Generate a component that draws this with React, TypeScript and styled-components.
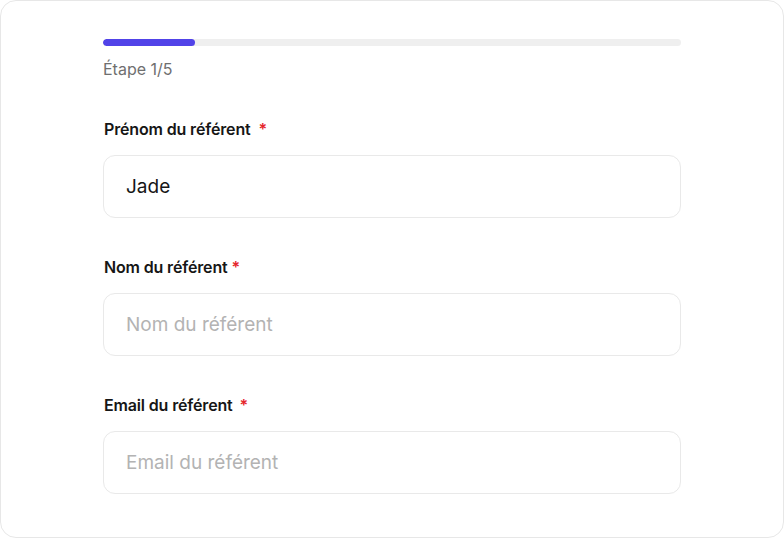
import React from "react";
import styled, { createGlobalStyle } from "styled-components";

const Global = createGlobalStyle`
  html, body { margin: 0; padding: 0; background: #ffffff; }
  body { font-family: Inter, "Noto Sans", sans-serif; -webkit-font-smoothing: antialiased; }
  * { box-sizing: border-box; }
`;

const Card = styled.div`
  width: 784px;
  height: 538px;
  border: 1px solid #e7e7e7;
  border-radius: 16px;
  background: #fff;
  padding: 38px 0 0 102px;
`;

const Content = styled.div`
  width: 578px;
  display: flex;
  flex-direction: column;
`;

const Track = styled.div`
  height: 7px;
  border-radius: 4px;
  background: #efefef;
  overflow: hidden;
`;

const Fill = styled.div`
  height: 100%;
  border-radius: 4px;
  background: #5143e8;
`;

const StepText = styled.div`
  margin-top: 13px;
  font-size: 16px;
  line-height: 20px;
  color: #6f6f6f;
`;

const Field = styled.div<{ $first?: boolean }>`
  display: flex;
  flex-direction: column;
  margin-top: ${(p) => (p.$first ? "40px" : "39px")};
`;

const Label = styled.label`
  font-size: 16px;
  font-weight: 600;
  line-height: 20px;
  letter-spacing: -0.15px;
  color: #161616;
  display: flex;
  align-items: center;
  padding-left: 1px;
`;

const Star = styled.span<{ $gap: number }>`
  color: #e5262b;
  margin-left: ${(p) => p.$gap}px;
  font-weight: 600;
`;

const Input = styled.input`
  margin-top: 16px;
  height: 63px;
  width: 100%;
  border: 1px solid #e9e9e9;
  border-radius: 12px;
  padding: 0 22px;
  font-family: Inter, "Noto Sans", sans-serif;
  font-size: 19px;
  color: #161616;
  background: #fff;
  outline: none;
  &::placeholder { color: #b3b3b3; }
`;

export default function App() {
  const progress = 91.5 / 578;
  return (
    <>
      <Global />
      <Card>
        <Content>
          <Track>
            <Fill style={{ width: `${progress * 100}%` }} />
          </Track>
          <StepText>Étape 1/5</StepText>
          <Field $first>
            <Label>Prénom du référent<Star $gap={8}>*</Star></Label>
            <Input defaultValue="Jade" placeholder="Prénom du référent" />
          </Field>
          <Field>
            <Label>Nom du référent<Star $gap={4}>*</Star></Label>
            <Input placeholder="Nom du référent" />
          </Field>
          <Field>
            <Label>Email du référent<Star $gap={7}>*</Star></Label>
            <Input placeholder="Email du référent" />
          </Field>
        </Content>
      </Card>
    </>
  );
}
